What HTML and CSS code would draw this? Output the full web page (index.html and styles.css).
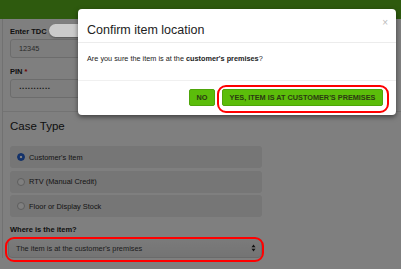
FILE: index.html
```html
<!DOCTYPE html>
<html lang="en">
<head>
  <meta charset="UTF-8">
  <title>Confirm item location</title>
  <link rel="stylesheet" href="styles.css">
</head>
<body>
  <div class="topbar"></div>
  <div class="page">
    <div class="login-panel">
      <label class="field-label">Enter TDC</label>
      <div class="text-input">12345</div>
      <label class="field-label">PIN <span class="req">*</span></label>
      <div class="text-input dots">•••••••••••</div>
    </div>
    <div class="case-panel">
      <h2 class="case-title">Case Type</h2>
      <div class="radio-list">
        <div class="radio-row"><span class="radio checked"></span>Customer's Item</div>
        <div class="radio-row"><span class="radio"></span>RTV (Manual Credit)</div>
        <div class="radio-row"><span class="radio"></span>Floor or Display Stock</div>
      </div>
      <label class="field-label where">Where is the item?</label>
      <div class="select-box">
        <span>The item is at the customer's premises</span>
        <svg class="arrows" width="5" height="8" viewBox="0 0 5 8">
          <path d="M0.5 3.2 L2.5 0.6 L4.5 3.2 Z M0.5 4.8 L2.5 7.4 L4.5 4.8 Z" fill="#222"/>
        </svg>
      </div>
    </div>
  </div>

  <div class="overlay"></div>
  <div class="pill"></div>

  <div class="modal">
    <div class="modal-header">
      <h1 class="modal-title">Confirm item location</h1>
      <span class="close">×</span>
    </div>
    <div class="modal-body">
      Are you sure the item is at the <b>customer's premises</b>?
    </div>
    <div class="modal-footer">
      <button class="btn btn-no">NO</button>
      <button class="btn btn-yes">YES, ITEM IS AT CUSTOMER'S PREMISES</button>
    </div>
  </div>

  <div class="mark mark-yes"></div>
  <div class="mark mark-select"></div>
</body>
</html>
```

FILE: styles.css
```css
body {
  margin: 0;
  width: 401px;
  height: 269px;
  overflow: hidden;
  position: relative;
  background: #fff;
  font-family: 'Liberation Sans', Arial, sans-serif;
  color: #333;
}
.topbar {
  height: 19px;
  background: #5db41c;
}
.page {
  margin-left: 2px;
  border-left: 1px solid #e2e2e2;
}
.login-panel {
  height: 93px;
  padding: 8px 0 0 7px;
  box-sizing: border-box;
  border-bottom: 1px solid #e6e6e6;
}
.field-label {
  display: block;
  font-size: 7.5px;
  font-weight: bold;
  line-height: 9px;
  color: #222;
}
.req {
  color: #d00;
}
.text-input {
  width: 300px;
  height: 19px;
  margin: 3px 0 9px;
  padding-left: 8px;
  box-sizing: border-box;
  border: 1px solid #d8d8d8;
  border-radius: 3px;
  background: #fafafa;
  font-size: 7.3px;
  line-height: 17px;
  color: #555;
}
.dots {
  font-family: 'DejaVu Sans', sans-serif;
  font-size: 4.5px;
  letter-spacing: 0.2px;
  color: #222;
}
.case-panel {
  padding: 7px 0 0 7px;
}
.case-title {
  margin: 0 0 13px;
  font-size: 11.5px;
  font-weight: normal;
  line-height: 14px;
  color: #222;
}
.radio-list {
  display: flex;
  flex-direction: column;
  gap: 2.5px;
  width: 252px;
}
.radio-row {
  height: 22px;
  display: flex;
  align-items: center;
  gap: 4px;
  padding-left: 7px;
  border-radius: 3px;
  background: #ececec;
  font-size: 7.4px;
  color: #2a2a2a;
}
.radio {
  width: 6px;
  height: 6px;
  border: 1px solid #bbb;
  border-radius: 50%;
  background: #fff;
}
.radio.checked {
  border-color: #2060d0;
  background: radial-gradient(circle, #fff 0 1.2px, #2a66d8 1.6px);
}
.where {
  margin-top: 8px;
}
.select-box {
  width: 254px;
  height: 20px;
  margin: 4px 0 0 -2px;
  padding: 0 5px 0 7px;
  box-sizing: border-box;
  display: flex;
  align-items: center;
  justify-content: space-between;
  border: 1px solid #d4d4d4;
  border-radius: 4px;
  background: linear-gradient(#f6f6f6, #e8e8e8);
  font-size: 7.4px;
  color: #3a3a3a;
}
.overlay {
  position: absolute;
  inset: 0;
  background: rgba(0,0,0,0.5);
}
.pill {
  position: absolute;
  left: 49px;
  top: 24px;
  width: 35px;
  height: 13px;
  border-radius: 7px;
  background: #cbcbcb;
  box-shadow: 0 1px 2px rgba(0,0,0,0.35);
}
.modal {
  position: absolute;
  left: 78px;
  top: 9px;
  width: 318px;
  height: 106px;
  background: #fff;
  border-radius: 4px;
  box-shadow: 0 2px 5px rgba(0,0,0,0.5);
  display: flex;
  flex-direction: column;
}
.modal-header {
  position: relative;
  height: 34px;
  padding: 14px 9px 0;
  box-sizing: border-box;
  border-bottom: 1px solid #ececec;
}
.modal-title {
  margin: 0;
  font-size: 12.5px;
  font-weight: normal;
  line-height: 14px;
  color: #222;
}
.close {
  position: absolute;
  right: 8px;
  top: 8px;
  font-size: 10px;
  color: #bbb;
}
.modal-body {
  height: 38px;
  padding: 11px 9px 0;
  box-sizing: border-box;
  border-bottom: 1px solid #f0f0f0;
  font-size: 7.3px;
  line-height: 9px;
  color: #222;
}
.modal-footer {
  flex: 1;
  display: flex;
  justify-content: flex-end;
  align-items: flex-start;
  gap: 7px;
  padding: 8px 13px 0 0;
}
.btn {
  height: 17px;
  padding: 0;
  border: 1px solid #4ea50a;
  border-radius: 2px;
  background: #5bbd0a;
  font-family: 'Liberation Sans', Arial, sans-serif;
  font-size: 7.3px;
  font-weight: bold;
  color: #2b3a12;
  text-align: center;
}
.btn-no {
  width: 26px;
}
.btn-yes {
  width: 161px;
}
.mark {
  position: absolute;
  border: 2px solid #f00;
  border-radius: 9px;
  box-sizing: border-box;
}
.mark-yes {
  left: 217px;
  top: 85px;
  width: 172px;
  height: 28px;
}
.mark-select {
  left: 5px;
  top: 237px;
  width: 259px;
  height: 25px;
}
```
